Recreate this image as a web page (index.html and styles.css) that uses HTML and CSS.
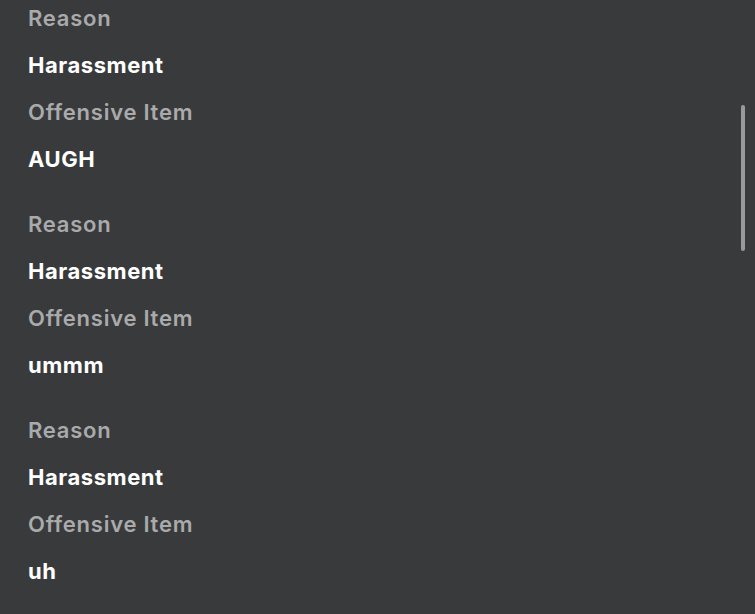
FILE: index.html
```html
<!DOCTYPE html>
<html>
<head>
<meta charset="utf-8">
<link rel="stylesheet" href="styles.css">
</head>
<body>
<div class="list">
  <section class="report">
    <div class="label">Reason</div>
    <div class="value">Harassment</div>
    <div class="label">Offensive Item</div>
    <div class="value">AUGH</div>
  </section>
  <section class="report">
    <div class="label">Reason</div>
    <div class="value">Harassment</div>
    <div class="label">Offensive Item</div>
    <div class="value">ummm</div>
  </section>
  <section class="report">
    <div class="label">Reason</div>
    <div class="value">Harassment</div>
    <div class="label">Offensive Item</div>
    <div class="value">uh</div>
  </section>
</div>
<div class="scrollbar"></div>
</body>
</html>
```
FILE: styles.css
```css
html, body {
  margin: 0;
  height: 100%;
  background: #393a3c;
  overflow: hidden;
}
body {
  font-family: Inter, "Noto Sans", sans-serif;
  font-size: 22px;
  line-height: 47px;
}
.list {
  display: flex;
  flex-direction: column;
  gap: 18px;
  padding-left: 28px;
  margin-top: -5px;
}
.label {
  color: #a9aaab;
  font-weight: 600;
  letter-spacing: 0.75px;
}
.value {
  color: #ffffff;
  font-weight: 700;
  letter-spacing: 0.55px;
}
.scrollbar {
  position: absolute;
  left: 741px;
  top: 105px;
  width: 4px;
  height: 146px;
  border-radius: 2px;
  background: #9a9a9b;
}
```
